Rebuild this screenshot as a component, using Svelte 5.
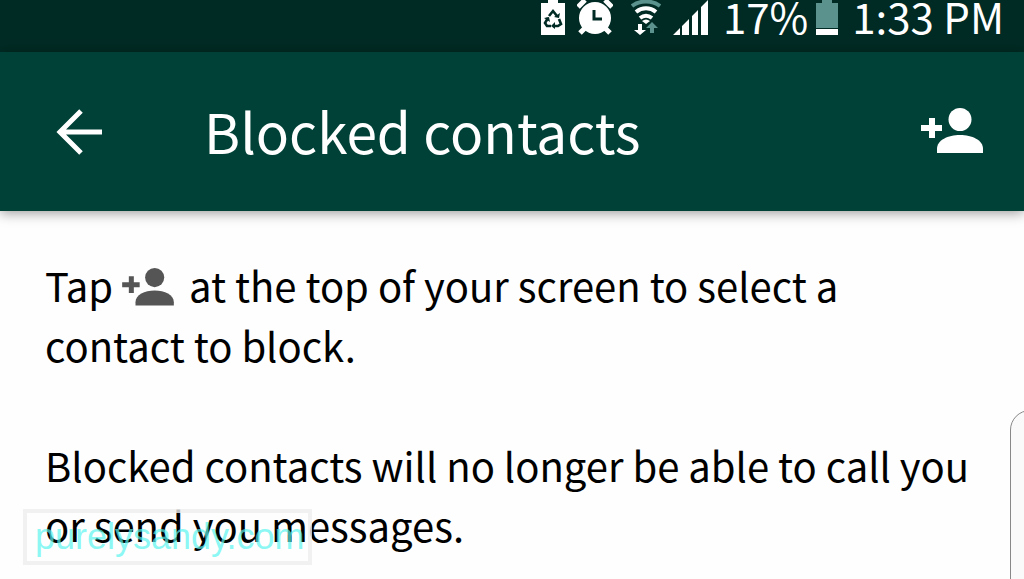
<script>
	let battery = 17;
	let time = '1:33 PM';
	let title = 'Blocked contacts';
</script>

{#snippet addPerson()}
	<svg class="add-person" viewBox="0 0 62 48" aria-hidden="true">
		<path d="M8 10h6v7h7v6h-7v7H8v-7H0v-6h8z" />
		<circle cx="39" cy="11.5" r="11.5" />
		<path d="M16 45v-4c0-9 11-14 23-14s23 5 23 14v4z" />
	</svg>
{/snippet}

<div class="screen">
	<div class="status-bar">
		<svg class="saver" viewBox="0 0 24 36" aria-hidden="true">
			<path fill="#fff" d="M7 0h10v3h7v32H0V3h7z" />
			<g fill="none" stroke="#002b24" stroke-width="2.6">
				<path d="M8 16l4-5 4 5M18 19l2 5-3 2h-4M10 26H6l-2-3 3-5" />
			</g>
			<path fill="#002b24" d="M13 17l5 1 1-5zM14 22v7l-4-3zM3 18l5-1 1 5z" />
		</svg>
		<svg class="alarm" viewBox="0 0 36 36" aria-hidden="true">
			<g stroke="#fff" stroke-width="5">
				<path d="M1 7l7-7M28 0l7 7M8 28l-5 5M28 28l5 5" />
			</g>
			<circle cx="18" cy="18" r="16" fill="#fff" />
			<path d="M17 10v9h8" fill="none" stroke="#002b24" stroke-width="3" />
		</svg>
		<svg class="wifi" viewBox="0 0 30 36" aria-hidden="true">
			<g fill="none" stroke-width="4">
				<path d="M1 6c8-6 20-6 28 0" stroke="#5b928d" />
				<path d="M5 12c6-5 14-5 20 0M9 18c4-3 8-3 12 0" stroke="#fff" />
			</g>
			<path fill="#fff" d="M11 21q4-3 8 0l-4 3zM7 24h4v6h4l-6 5-6-5h4z" />
			<path fill="#5b928d" d="M19 33v-5h-4l6-6 6 6h-4v5z" />
		</svg>
		<svg class="signal" viewBox="0 0 36 36" aria-hidden="true">
			<path fill="#fff" d="M0 35l7-7v7zM9 26l7-7v16H9zM19 16l6-6v25h-6zM28 7l7-7v35h-7z" />
		</svg>
		<span class="percent">{battery}%</span>
		<svg class="battery" viewBox="0 0 22 36" aria-hidden="true">
			<path fill="#5b928d" d="M6 0h10v3h6v25H0V3h6z" />
			<path fill="#fff" d="M0 29h22v6H0z" />
		</svg>
		<span class="time">{time}</span>
	</div>

	<header>
		<button class="back" aria-label="Back">
			<svg viewBox="0 0 46 46" aria-hidden="true">
				<path d="M25 2L4 23l21 21M3 23h43" fill="none" stroke="#fff" stroke-width="5" />
			</svg>
		</button>
		<h1>{title}</h1>
		<button class="add" aria-label="Add contact">{@render addPerson()}</button>
	</header>

	<main>
		<p>Tap {@render addPerson()} at the top of your screen to select a contact to block.</p>
		<p>Blocked contacts will no longer be able to call you or send you messages.</p>
	</main>

	<div class="edge-panel"></div>
	<div class="watermark">purelysandy.com</div>
</div>

<style>
	:global(body) {
		margin: 0;
		background: #fefefe;
	}

	.screen {
		position: relative;
		min-height: 100vh;
		overflow: hidden;
		font-family: 'Noto Sans CJK SC', 'Noto Sans', sans-serif;
		color: #000;
	}

	.status-bar {
		display: flex;
		justify-content: flex-end;
		align-items: flex-start;
		height: 52px;
		padding-right: 20px;
		background: #002b24;
		color: #fff;
		font-size: 42px;
		line-height: 32px;
	}

	.status-bar svg {
		height: 36px;
	}

	.saver {
		width: 24px;
		margin-right: 12px;
	}

	.alarm {
		width: 36px;
		margin-right: 18px;
	}

	.wifi {
		width: 30px;
		margin-right: 12px;
	}

	.signal {
		width: 36px;
		margin-right: 14px;
	}

	.battery {
		width: 22px;
		margin: 0 14px 0 8px;
	}

	header {
		display: flex;
		align-items: center;
		height: 159px;
		padding: 0 41px 0 56px;
		background: #004137;
		color: #fff;
		box-shadow: 0 2px 12px rgba(0, 0, 0, 0.4);
	}

	button {
		display: flex;
		padding: 0;
		border: 0;
		background: none;
		color: inherit;
	}

	.back svg {
		width: 46px;
		height: 46px;
	}

	h1 {
		flex: 1;
		margin: 0 0 4px 102px;
		font-size: 55px;
		font-weight: 400;
		line-height: 80px;
	}

	.add-person {
		fill: currentColor;
	}

	.add .add-person {
		width: 62px;
		height: 48px;
	}

	main {
		padding: 44px 45px 0;
		font-size: 40px;
		line-height: 60px;
	}

	p {
		margin: 0;
	}

	p + p {
		margin-top: 60px;
	}

	p .add-person {
		width: 52px;
		height: 40px;
		margin-right: 6px;
		vertical-align: -6px;
		color: #555;
	}

	.edge-panel {
		position: absolute;
		top: 410px;
		right: -12px;
		bottom: -12px;
		width: 24px;
		border: 1px solid #888;
		border-radius: 20px 0 0 0;
		background: #fafafa;
	}

	.watermark {
		position: absolute;
		left: 23px;
		bottom: 14px;
		padding: 0 4px 0 8px;
		border: 4px solid rgba(238, 238, 238, 0.8);
		color: rgba(90, 245, 240, 0.7);
		font-family: 'Liberation Sans', sans-serif;
		font-size: 36px;
		line-height: 48px;
	}
</style>
